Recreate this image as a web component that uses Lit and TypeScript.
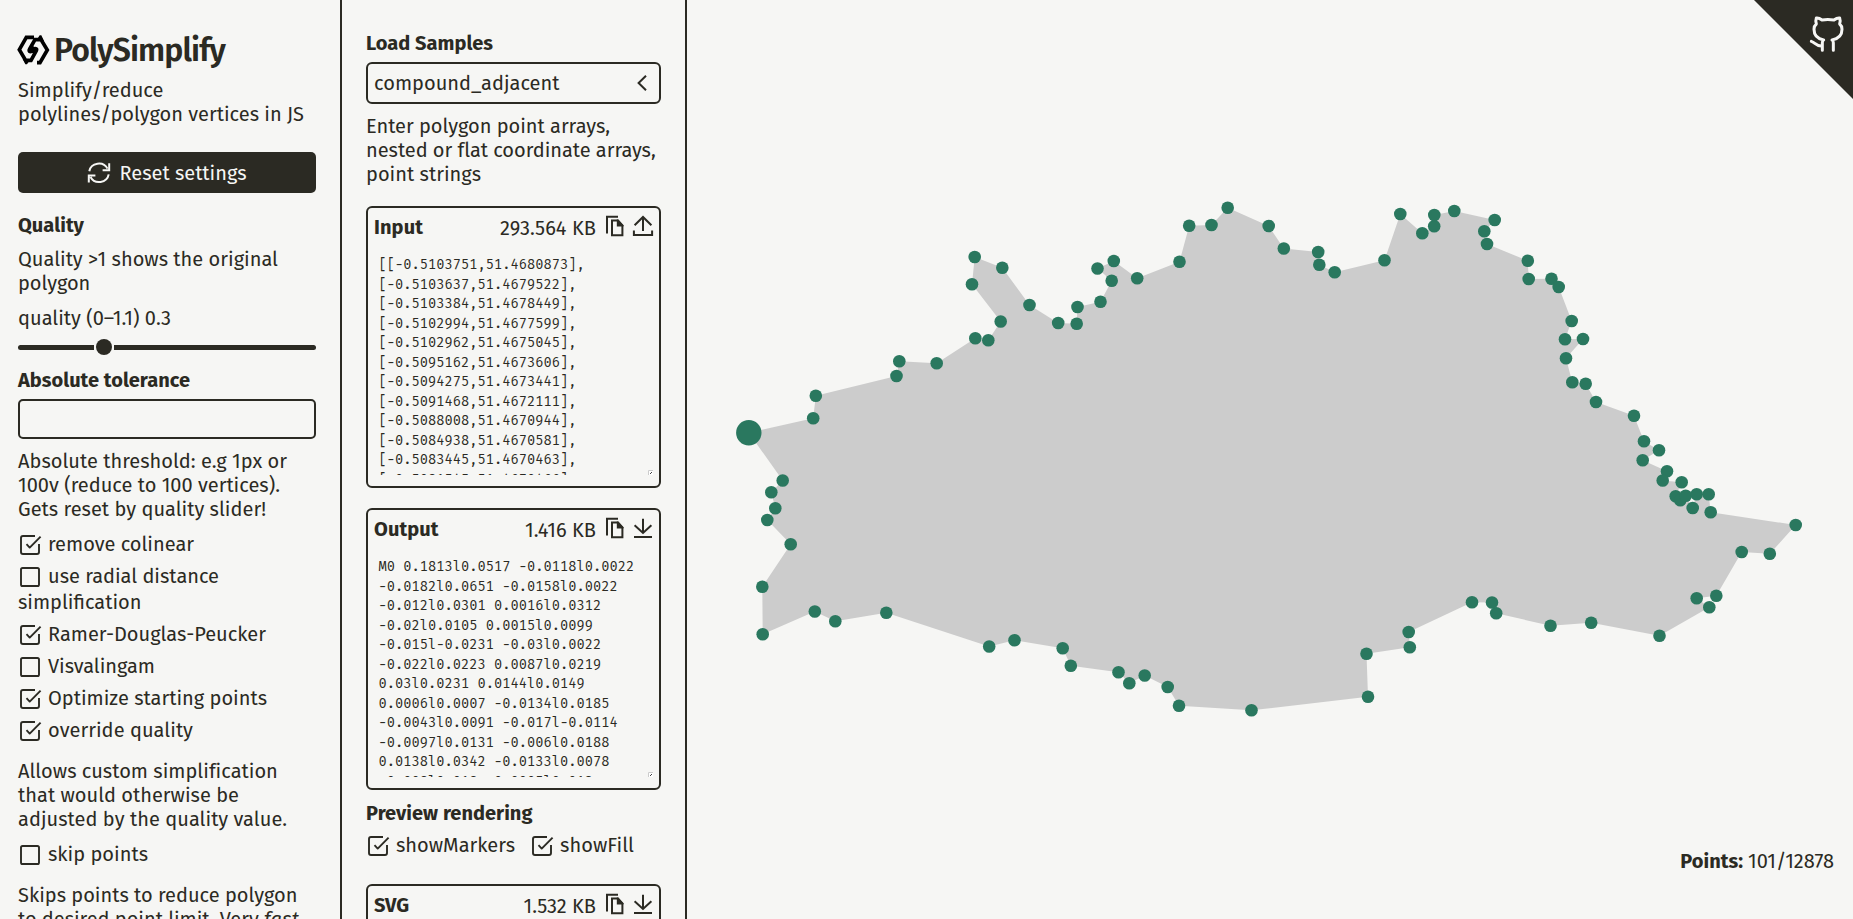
import { LitElement, html, svg, css } from "lit";
import { customElement } from "lit/decorators.js";

type Point = [number, number];

const POINTS: Point[] = [
  [748.8, 432.7], [813.2, 418.3], [815.8, 395.7], [896.5, 376], [899.3, 361.2], [936.7, 363.2],
  [975.3, 338.3], [988.3, 340.3], [1000.7, 321.5], [972, 284.3], [974.7, 257], [1002.3, 267.8],
  [1029.5, 305], [1058.2, 323], [1076.7, 323.7], [1077.5, 307], [1100.5, 301.7], [1111.7, 280.7],
  [1097.5, 268.5], [1113.8, 261], [1137.2, 278.2], [1179.5, 261.7], [1189.2, 225.7], [1211.5, 225],
  [1227.7, 207.7], [1268.7, 226], [1283.8, 248.5], [1318.2, 252], [1319.3, 264.7], [1334.7, 272.3],
  [1384.5, 260.3], [1400.3, 214], [1422.3, 233.3], [1434.2, 226.3], [1434.3, 215], [1454.3, 211],
  [1494.7, 220], [1484.3, 231.2], [1487, 244], [1527.8, 260.8], [1528.7, 279], [1551.5, 278.8],
  [1558.7, 287], [1571.7, 321], [1565, 339.3], [1583, 339], [1566, 358.3], [1572.3, 382.3],
  [1585.7, 383.7], [1596, 402], [1634, 415.7], [1644, 441.3], [1659, 450.3], [1642.7, 460.3],
  [1667, 471.3], [1662.7, 480.5], [1681.7, 482.2], [1675.7, 496.3], [1680.3, 500.3], [1685.7, 495.7],
  [1692.7, 508], [1696.7, 494.3], [1708.7, 494.3], [1710.7, 512.3], [1795.7, 525], [1769.8, 553.8],
  [1741.7, 552], [1716.3, 595.7], [1696.7, 598.3], [1709.3, 607.3], [1659.5, 635.7], [1591.2, 622.8],
  [1550.5, 625.7], [1496.2, 613.3], [1492, 602.5], [1472, 602.3], [1408.7, 632], [1409.8, 647.3],
  [1366.5, 653.7], [1368, 696.7], [1251.5, 710.3], [1179, 705.7], [1167.7, 687], [1144.7, 675.5],
  [1129.3, 683.3], [1118.5, 672.3], [1070.8, 665.8], [1062.7, 648.2], [1014.5, 640.3], [989.2, 646.5],
  [886.3, 612.8], [835.3, 621.3], [814.8, 611.5], [762.7, 634.3], [762.3, 586.7], [790.7, 544.3],
  [767.3, 520], [775.3, 508.3], [771.3, 492.3], [782.7, 480.5],
];

const INPUT = `[[-0.5103751,51.4680873],
[-0.5103637,51.4679522],
[-0.5103384,51.4678449],
[-0.5102994,51.4677599],
[-0.5102962,51.4675045],
[-0.5095162,51.4673606],
[-0.5094275,51.4673441],
[-0.5091468,51.4672111],
[-0.5088008,51.4670944],
[-0.5084938,51.4670581],
[-0.5083445,51.4670463],
[-0.5081545,51.4670466],`;

const OUTPUT = `M0 0.1813l0.0517 -0.0118l0.0022
-0.0182l0.0651 -0.0158l0.0022
-0.012l0.0301 0.0016l0.0312
-0.02l0.0105 0.0015l0.0099
-0.015l-0.0231 -0.03l0.0022
-0.022l0.0223 0.0087l0.0219
0.03l0.0231 0.0144l0.0149
0.0006l0.0007 -0.0134l0.0185
-0.0043l0.0091 -0.017l-0.0114
-0.0097l0.0131 -0.006l0.0188
0.0138l0.0342 -0.0133l0.0078
-0.008l0.018 -0.0005l0.013`;

// A run of text tracked to a given width.
const t = (text: string, width: number) => html`<span class="t" data-w=${width}>${text}</span>`;

const checkbox = (on: boolean) => html`<svg class="check" width="24" height="24" viewBox="0 0 24 24">
  ${on
    ? svg`<path d="M17 3H5a2 2 0 0 0-2 2v14a2 2 0 0 0 2 2h14a2 2 0 0 0 2-2v-8" /><path d="M8.5 11.2l3.2 3.4L22.6 3.6" />`
    : svg`<rect x="3" y="3" width="18" height="18" rx="1.6" />`}
</svg>`;

const copyIcon = html`<svg width="18" height="22" viewBox="0 0 18 22">
  <path d="M1 18.5V1.8h11" fill="none" stroke="currentColor" stroke-width="2" />
  <path d="M6 5.6h5.8l4.6 4.8v9.8H6z" fill="none" stroke="currentColor" stroke-width="2" />
  <path d="M10.8 4.6h1.6l5 5.6v1.4h-6.6z" fill="currentColor" />
</svg>`;

const uploadIcon = html`<svg width="22" height="22" viewBox="0 0 22 22">
  <path d="M1.9 15.5v4.6h18.2v-4.6M11 16V2.2M2.6 10.2L11 2l8.4 8.2" fill="none" stroke="currentColor" stroke-width="2" />
</svg>`;

const downloadIcon = html`<svg width="22" height="22" viewBox="0 0 22 22">
  <path d="M2 20h18M11 1.8v14M2.6 8.2L11 16l8.4-7.8" fill="none" stroke="currentColor" stroke-width="2" />
</svg>`;

@customElement("app-root")
export class AppRoot extends LitElement {
  static styles = css`
    :host {
      display: grid;
      grid-template-columns: 342px 345px 1fr;
      height: 100vh;
      overflow: hidden;
      background: #f6f6f4;
      color: #2b2a23;
      font: 400 20px/24px "Fira Sans", "Noto Sans", sans-serif;
    }
    * { box-sizing: border-box; }
    svg { display: block; flex: none; }
    .col { border-right: 2px solid #2b2a23; overflow: hidden; height: 100vh; }
    .settings { padding: 30px 24px 0 18px; }
    .io { padding: 31px 24px 0 24px; }
    .t { white-space: pre; }
    .line { display: block; height: 24px; white-space: nowrap; }
    .bold { font-weight: 700; }
    .brand { display: flex; align-items: center; height: 40px; margin: 0 0 8px -1px; font-size: 32px; line-height: 40px; font-weight: 600; gap: 4px; }
    .button { display: flex; align-items: center; justify-content: center; gap: 9px; height: 41px; margin: 26px 0 20px; border: 0; border-radius: 5px; background: #2b2a23; color: #f6f6f4; width: 100%; padding: 1px 1px 0 0; font: inherit; }
    .para { margin: 0; }
    .mt10 { margin-top: 10px; }
    .mt11 { margin-top: 11px; }
    .mt17 { margin-top: 17px; }
    .gap20 { height: 20px; }
    .slider { display: flex; align-items: center; height: 20px; margin: 7px 0 11px; }
    .track { height: 5px; border-radius: 3px; background: #2b2a23; }
    .before { width: 76px; border-radius: 3px 0 0 3px; }
    .after { flex: 1; border-radius: 0 3px 3px 0; }
    .thumb { width: 16px; height: 16px; margin: 0 2px; border-radius: 50%; background: #2b2a23; }
    .field { height: 40px; margin-top: 7px; border: 2px solid #2b2a23; border-radius: 5px; }
    .option { display: flex; height: 24px; margin-top: 8px; gap: 6px; }
    .check { width: 24px; height: 24px; margin-top: 1px; fill: none; stroke: #2b2a23; stroke-width: 1.9; stroke-linejoin: round; stroke-linecap: butt; }
    .wrap { height: 26px; line-height: 28px; }
    .select { display: flex; align-items: center; justify-content: space-between; height: 42px; margin: 7px 0 10px; padding: 0 12px 1px 6px; border: 2px solid #2b2a23; border-radius: 6px; }
    .box { border: 2px solid #2b2a23; border-radius: 6px; padding: 7px 5px 0 6px; height: 282px; }
    .box + .box { margin-top: 20px; }
    .head { display: flex; align-items: flex-start; height: 30px; line-height: 26px; }
    .head b { flex: 1; line-height: 25px; }
    .copy { margin: 0 8px 0 10px; }
    .code { position: relative; height: 220px; margin-top: 10px; overflow: hidden; padding: 0 0 0 4.5px; }
    .code pre { margin: 0; font: 13.75px/19.5px "Fira Mono", "Noto Sans Mono", "Liberation Mono", monospace; }
    .grip { position: absolute; right: 1px; bottom: 0; }
    .preview { display: flex; gap: 15px; margin-bottom: 27px; }
    .canvas { position: relative; height: 100vh; overflow: hidden; }
    .corner { position: absolute; right: 0; top: 0; }
    .points { position: absolute; right: 19px; top: 849px; display: flex; gap: 5px; }
  `;

  firstUpdated() {
    this.renderRoot.querySelectorAll<HTMLElement>("[data-w]").forEach((el) => {
      const target = Number(el.dataset.w) + 1;
      const natural = el.getBoundingClientRect().width;
      el.style.letterSpacing = `${(target - natural) / (el.textContent || " ").length}px`;
    });
  }

  option(text: string, width: number, on: boolean) {
    return html`<label class="option">${checkbox(on)}${t(text, width)}</label>`;
  }

  box(title: string, tw: number, size: string, sw: number, icon: unknown, code: string) {
    return html`<section class="box">
      <div class="head"><b>${t(title, tw)}</b>${t(size, sw)}<span class="copy">${copyIcon}</span><span>${icon}</span></div>
      <div class="code"><pre>${code}</pre>
        <svg class="grip" width="5" height="5" viewBox="0 0 5 5"><rect width="5" height="5" fill="#fff" /><path d="M.5 5V.5H5" fill="none" stroke="#ccc" /><path d="M2 4l2-2" stroke="#444" /></svg>
      </div>
    </section>`;
  }

  render() {
    return html`
      <aside class="col settings">
        <div class="brand">
          <svg width="33" height="30" viewBox="50 100 99 90" fill="none" stroke="#000" stroke-width="11">
            <path d="M101 107H78L57 144L76 176H92L108 147Q111 141 105 141Q101 141 99 145L94 152" />
            <path d="M110 183H119L141 145L122 114H104L88 142Q84 149 90 150Q95 150 98 145L104 137" />
            <path d="M67 172H91L80 188H75ZM131 118H107L118 101H123Z" fill="#000" stroke="none" />
          </svg>
          ${t("PolySimplify", 170)}
        </div>
        <p class="para"><span class="line">${t("Simplify/reduce", 144.5)}</span><span class="line">${t("polylines/polygon vertices in JS", 285)}</span></p>
        <button class="button">
          <svg width="24" height="22" viewBox="0 0 24 22" fill="none" stroke="currentColor" stroke-width="2">
            <path d="M2.3 9.2A9.7 9.2 0 0 1 20.5 6.6M22.2 1.2v7.1h-6.6M21.7 12.4A9.7 9.2 0 0 1 3.5 15M1.8 20.6v-7h6.6" />
          </svg>
          ${t("Reset settings", 126)}
        </button>
        <span class="line bold">${t("Quality", 65)}</span>
        <p class="para mt10"><span class="line">${t("Quality >1 shows the original", 259)}</span><span class="line">${t("polygon", 71.3)}</span></p>
        <p class="para mt11"><span class="line">${t("quality (0–1.1) 0.3", 152)}</span></p>
        <div class="slider"><i class="track before"></i><i class="thumb"></i><i class="track after"></i></div>
        <span class="line bold">${t("Absolute tolerance", 171)}</span>
        <div class="field"></div>
        <p class="para mt10">
          <span class="line">${t("Absolute threshold: e.g 1px or", 268)}</span>
          <span class="line">${t("100v (reduce to 100 vertices).", 261)}</span>
          <span class="line">${t("Gets reset by quality slider!", 247)}</span>
        </p>
        <div class="mt11"></div>
        ${this.option("remove colinear", 145, true)}
        ${this.option("use radial distance", 170, false)}
        <span class="line wrap">${t("simplification", 122.5)}</span>
        ${this.option("Ramer-Douglas-Peucker", 217, true)}
        ${this.option("Visvalingam", 106, false)}
        ${this.option("Optimize starting points", 218, true)}
        ${this.option("override quality", 144, true)}
        <p class="para mt17">
          <span class="line">${t("Allows custom simplification", 258)}</span>
          <span class="line">${t("that would otherwise be", 220)}</span>
          <span class="line">${t("adjusted by the quality value.", 268)}</span>
        </p>
        <div class="mt11"></div>
        ${this.option("skip points", 99, false)}
        <p class="para mt17">
          <span class="line">${t("Skips points to reduce polygon", 278.5)}</span>
          <span class="line">${t("to desired point limit. Very ", 245)}<em>${t("fast", 34)}</em></span>
        </p>
      </aside>

      <main class="col io">
        <span class="line bold">${t("Load Samples", 126)}</span>
        <div class="select">${t("compound_adjacent", 184.5)}
          <svg width="10" height="16" viewBox="0 0 10 16"><path d="M9 .8L1.6 8L9 15.2" fill="none" stroke="#2b2a23" stroke-width="2" /></svg>
        </div>
        <p class="para">
          <span class="line">${t("Enter polygon point arrays,", 243)}</span>
          <span class="line">${t("nested or flat coordinate arrays,", 288)}</span>
          <span class="line">${t("point strings", 114)}</span>
        </p>
        <div class="gap20"></div>
        ${this.box("Input", 48, "293.564 KB", 95, uploadIcon, INPUT)}
        ${this.box("Output", 63.5, "1.416 KB", 70, downloadIcon, OUTPUT)}
        <span class="line bold mt11">${t("Preview rendering", 165.5)}</span>
        <div class="preview">${this.option("showMarkers", 118, true)}${this.option("showFill", 73, true)}</div>
        ${this.box("SVG", 34, "1.532 KB", 71.5, downloadIcon, "")}
      </main>

      <section class="canvas">
        <svg width="1166" height="919" viewBox="687 0 1166 919">
          <polygon points=${POINTS.map((p) => p.join(",")).join(" ")} fill="#ccc" />
          ${POINTS.map(([x, y], i) => svg`<circle cx=${x} cy=${y} r=${i ? 6.3 : 12.7} fill="#2a785f" />`)}
        </svg>
        <svg class="corner" width="99" height="99" viewBox="0 0 297 297">
          <path d="M0 0H297V297Z" fill="#2b2a23" />
          <path transform="translate(-312 0)" fill="none" stroke="#f6f6f4" stroke-width="9" stroke-linecap="round" stroke-linejoin="round"
            d="M517 151V128Q517 122 521 120C503 117 492 108 492 88Q492 78 499 72Q496 62 499 54Q507 53 516 60Q533 57 552 60Q561 53 569 54Q572 62 569 72Q576 78 576 88C576 108 565 117 546 120Q550 122 550 128V151M517 138C500 141 496 127 484 124" />
        </svg>
        <div class="points"><b>${t("Points:", 61.7)}</b>${t("101/12878", 85)}</div>
      </section>
    `;
  }
}
